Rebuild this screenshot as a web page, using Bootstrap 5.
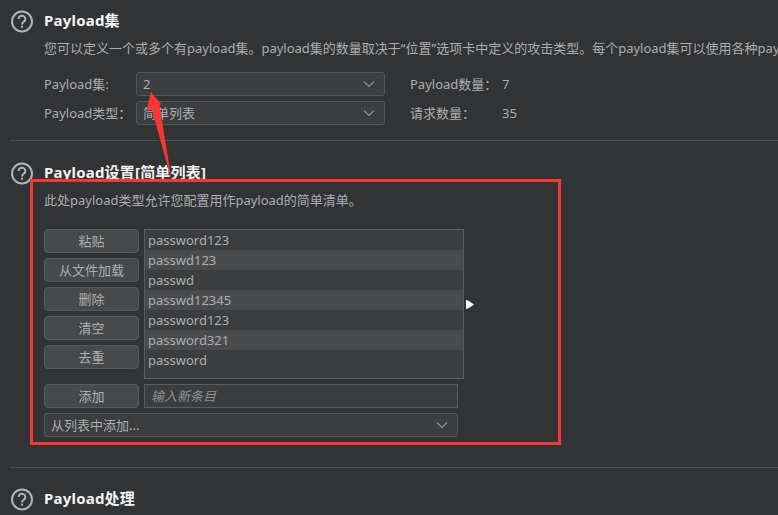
<!DOCTYPE html>
<html lang="zh">
<head>
<meta charset="utf-8">
<title>Payloads</title>
<link href="https://cdn.jsdelivr.net/npm/bootstrap@5.3.0/dist/css/bootstrap.min.css" rel="stylesheet">
<style>
html,body{height:515px;overflow:hidden}
body{background:#323335;color:#adaeaf;font-family:"Noto Sans","Noto Sans CJK SC",sans-serif;font-size:13px;line-height:18px;position:relative}
.pane{padding:0 0 0 10px}
.sect{display:flex}
.qmark{width:24px;height:24px;flex:none;margin-right:10px}
.sect-body{min-width:0;flex:1}
.sect-title{font-size:15px;font-weight:700;letter-spacing:.2px;color:#f2f2f2;line-height:20px;margin:0;white-space:nowrap}
.sect-desc{margin:9px 0 0;white-space:nowrap;overflow:hidden;line-height:18px}
.rule{height:1px;background:#4d4e50;margin:0}
.first{padding-top:10px}
.fieldgrid{display:grid;grid-template-columns:92px 249px 25px 92px auto;row-gap:5px;align-items:center;margin-top:15px}
.combo{height:24px;background:#3c3d3f;border:1px solid #55565a;border-radius:3px;display:flex;align-items:center;justify-content:space-between;padding:0 9px 0 6px;color:#adaeaf}
.combo svg{width:12px;height:8px;flex:none}
.tool-btn{width:95px;height:24px;background:#47494b;border:1px solid #57595b;border-radius:4px;color:#adaeaf;font-size:13px;line-height:20px;padding:0;display:block;text-align:center}
.listbox{width:320px;height:150px;background:#3c3d3f;border:1px solid #5a5b5e;padding:0}
.listbox div{height:20px;line-height:20px;padding-left:3px}
.listbox div:nth-child(even){background:#4a4b4d}
.entry{width:314px;height:24px;background:#3c3d3f;border:1px solid #5a5b5e;padding:0 6px;color:#8f9091;font-style:italic;line-height:22px}
.pointer{width:8px;height:9px;align-self:center;margin-left:2px;margin-top:1px}
.note-box{position:absolute;left:30px;top:179px;width:531px;height:266px;border:3px solid #f93535;pointer-events:none}
.note-arrow{position:absolute;left:140px;top:85px;width:50px;height:100px;pointer-events:none}
.list-row{margin-top:20px}
</style>
</head>
<body>
<div class="pane">
  <section class="sect first">
    <svg class="qmark" viewBox="0 0 24 24"><circle cx="12" cy="11.5" r="10" fill="none" stroke="#b2b3b4" stroke-width="2"/><path d="M8.6 9a3.4 3.2 0 1 1 5.3 2.6c-1.2.8-1.9 1.3-1.9 2.8" fill="none" stroke="#b2b3b4" stroke-width="2"/><rect x="11" y="15.6" width="2" height="2" fill="#b2b3b4"/></svg>
    <div class="sect-body">
      <h2 class="sect-title">Payload集</h2>
      <p class="sect-desc">您可以定义一个或多个有payload集。payload集的数量取决于“位置”选项卡中定义的攻击类型。每个payload集可以使用各种payload类型，并且每种payload类型都可以以不同方式定制。</p>
      <div class="fieldgrid">
        <span>Payload集:</span>
        <div class="combo"><span>2</span><svg viewBox="0 0 12 8"><path d="M1 1.5l5 5 5-5" fill="none" stroke="#909193" stroke-width="1.2"/></svg></div>
        <span></span>
        <span>Payload数量：</span>
        <span>7</span>
        <span>Payload类型：</span>
        <div class="combo"><span>简单列表</span><svg viewBox="0 0 12 8"><path d="M1 1.5l5 5 5-5" fill="none" stroke="#909193" stroke-width="1.2"/></svg></div>
        <span></span>
        <span>请求数量：</span>
        <span>35</span>
      </div>
    </div>
  </section>
  <div class="rule" style="margin-top:15px"></div>
  <section class="sect" style="padding-top:21px">
    <svg class="qmark" viewBox="0 0 24 24"><circle cx="12" cy="11.5" r="10" fill="none" stroke="#b2b3b4" stroke-width="2"/><path d="M8.6 9a3.4 3.2 0 1 1 5.3 2.6c-1.2.8-1.9 1.3-1.9 2.8" fill="none" stroke="#b2b3b4" stroke-width="2"/><rect x="11" y="15.6" width="2" height="2" fill="#b2b3b4"/></svg>
    <div class="sect-body">
      <h2 class="sect-title">Payload设置[简单列表]</h2>
      <p class="sect-desc">此处payload类型允许您配置用作payload的简单清单。</p>
      <div class="d-flex list-row">
        <div class="d-flex flex-column" style="gap:5px;margin-right:5px">
          <button class="tool-btn">粘贴</button>
          <button class="tool-btn">从文件加载</button>
          <button class="tool-btn">删除</button>
          <button class="tool-btn">清空</button>
          <button class="tool-btn">去重</button>
        </div>
        <div class="listbox">
          <div>password123</div>
          <div>passwd123</div>
          <div>passwd</div>
          <div>passwd12345</div>
          <div>password123</div>
          <div>password321</div>
          <div>password</div>
        </div>
        <svg class="pointer" viewBox="0 0 8 9"><path d="M0 0L3 1 8 4.5 3 8 0 9z" fill="#fff"/></svg>
      </div>
      <div class="d-flex" style="margin-top:5px;gap:5px">
        <button class="tool-btn">添加</button>
        <div class="entry">输入新条目</div>
      </div>
      <div class="combo" style="width:414px;margin-top:5px"><span>从列表中添加...</span><svg viewBox="0 0 12 8"><path d="M1 1.5l5 5 5-5" fill="none" stroke="#909193" stroke-width="1.2"/></svg></div>
    </div>
  </section>
  <div class="rule" style="margin-top:30px"></div>
  <section class="sect" style="padding-top:20px">
    <svg class="qmark" viewBox="0 0 24 24"><circle cx="12" cy="11.5" r="10" fill="none" stroke="#b2b3b4" stroke-width="2"/><path d="M8.6 9a3.4 3.2 0 1 1 5.3 2.6c-1.2.8-1.9 1.3-1.9 2.8" fill="none" stroke="#b2b3b4" stroke-width="2"/><rect x="11" y="15.6" width="2" height="2" fill="#b2b3b4"/></svg>
    <div class="sect-body">
      <h2 class="sect-title">Payload处理</h2>
    </div>
  </section>
</div>
<div class="note-box"></div>
<svg class="note-arrow" viewBox="0 0 50 100"><path d="M11 7L21 19 19.5 21 32 97 12 25 7 24Z" fill="#f93535"/></svg>
</body>
</html>
